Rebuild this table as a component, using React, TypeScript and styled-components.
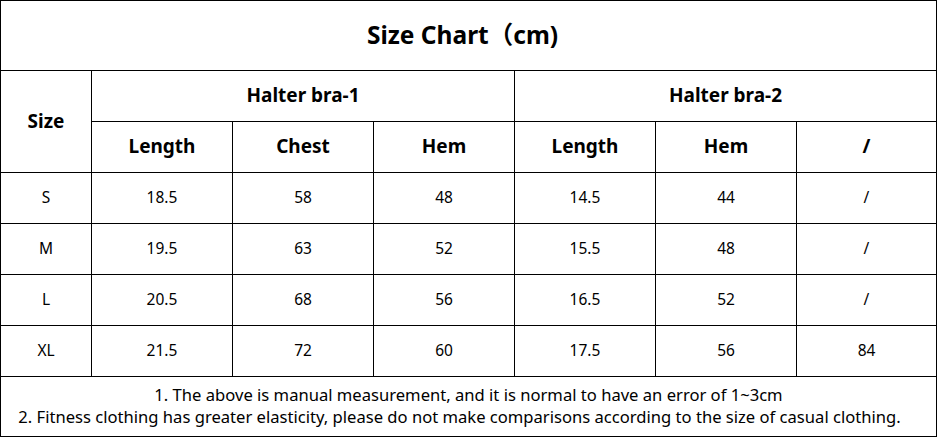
import React from "react";
import styled, { createGlobalStyle } from "styled-components";

const GlobalStyle = createGlobalStyle`
  html, body {
    margin: 0;
    padding: 0;
    background: #ffffff;
  }
  body {
    font-family: "Noto Sans", "Open Sans", "Noto Sans CJK SC", sans-serif;
    color: #000000;
  }
`;

const Chart = styled.div`
  display: grid;
  width: 937px;
  grid-template-columns: 90px repeat(5, 140px) 139px;
  grid-template-rows: 69px repeat(6, 50px) 59px;
  gap: 1px;
  padding: 1px;
  box-sizing: border-box;
  background: #000000;
`;

const sizes = { title: "24.5px", head: "19px", data: "15.5px" };

const Cell = styled.div<{ $span?: number; $rows?: number; $kind?: "title" | "head" | "data" }>`
  background: #ffffff;
  display: flex;
  align-items: center;
  justify-content: center;
  text-align: center;
  padding-bottom: ${({ $kind }) => ($kind === "title" ? "4px" : "2px")};
  padding-right: ${({ $kind }) => ($kind === "title" ? "12px" : "0")};
  box-sizing: border-box;
  grid-column: span ${({ $span }) => $span ?? 1};
  grid-row: span ${({ $rows }) => $rows ?? 1};
  font-size: ${({ $kind }) => sizes[$kind ?? "data"]};
  font-weight: ${({ $kind }) => ($kind === "data" ? 400 : 700)};
`;

const Notes = styled.div`
  grid-column: 1 / -1;
  background: #ffffff;
  display: flex;
  flex-direction: column;
  align-items: center;
  justify-content: center;
  font-size: 16.6px;
  line-height: 22px;
  padding-bottom: 2px;
`;

const NoteLine = styled.span<{ $shift?: number }>`
  padding-right: ${({ $shift }) => $shift ?? 0}px;
`;

const rows = [
  ["S", "18.5", "58", "48", "14.5", "44", "/"],
  ["M", "19.5", "63", "52", "15.5", "48", "/"],
  ["L", "20.5", "68", "56", "16.5", "52", "/"],
  ["XL", "21.5", "72", "60", "17.5", "56", "84"],
];

export default function App() {
  return (
    <>
      <GlobalStyle />
      <Chart>
        <Cell $span={7} $kind="title">Size Chart（cm)</Cell>
        <Cell $rows={2} $kind="head">Size</Cell>
        <Cell $span={3} $kind="head">Halter bra-1</Cell>
        <Cell $span={3} $kind="head">Halter bra-2</Cell>
        {["Length", "Chest", "Hem", "Length", "Hem", "/"].map((h, i) => (
          <Cell key={i} $kind="head">{h}</Cell>
        ))}
        {rows.map((r) =>
          r.map((v, i) => (
            <Cell key={r[0] + i} $kind="data">{v}</Cell>
          ))
        )}
        <Notes>
          <NoteLine>1. The above is manual measurement, and it is normal to have an error of 1~3cm</NoteLine>
          <NoteLine $shift={18}>2. Fitness clothing has greater elasticity, please do not make comparisons according to the size of casual clothing.</NoteLine>
        </Notes>
      </Chart>
    </>
  );
}
